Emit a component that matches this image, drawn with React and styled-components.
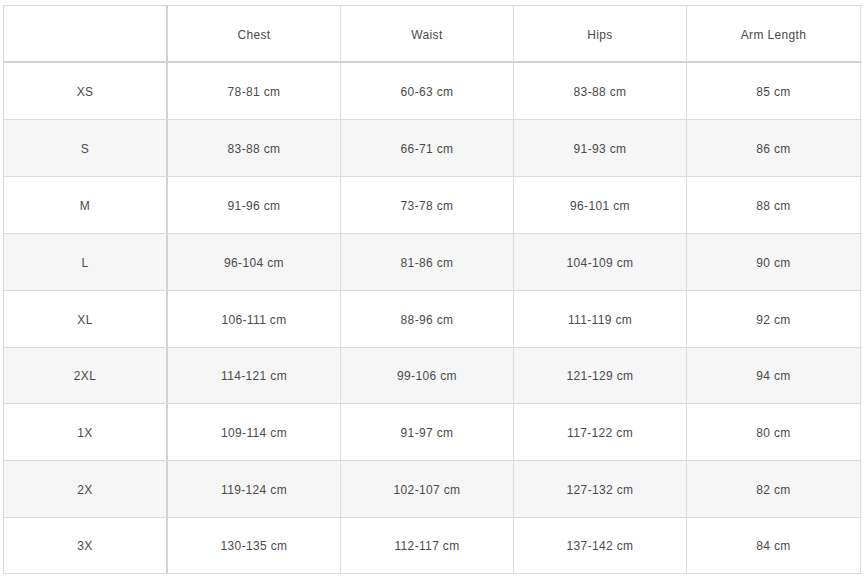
import React from "react";
import styled, { createGlobalStyle } from "styled-components";

const Global = createGlobalStyle`
  html, body { margin: 0; padding: 0; background: #ffffff; }
  body { font-family: "Liberation Sans", Arial, sans-serif; }
`;

const Page = styled.div`
  padding: 5px 0 0 3px;
`;

const Table = styled.div`
  display: flex;
  flex-direction: column;
  width: 858px;
  border-top: 1px solid #d8d8d8;
  border-left: 1px solid #d8d8d8;
  font-size: 12px;
  letter-spacing: 0.35px;
  color: #4a4a4a;
`;

const Row = styled.div`
  display: grid;
  grid-template-columns: 164px 173px 173px 173px 174px;
  height: ${(p) => p.$h}px;
  box-sizing: border-box;
  border-bottom: ${(p) => (p.$head ? "2px solid #d2d2d2" : "1px solid #dcdcdc")};
  background: ${(p) => (p.$shaded ? "#f6f6f6" : "#ffffff")};
`;

const Cell = styled.div`
  display: flex;
  align-items: center;
  justify-content: center;
  box-sizing: border-box;
  border-right: ${(p) => (p.$first ? "2px solid #d2d2d2" : "1px solid #dcdcdc")};
  padding-top: ${(p) => (p.$head ? 2 : 1)}px;
`;

const headers = ["Chest", "Waist", "Hips", "Arm Length"];
const rows = [
  ["XS", "78-81 cm", "60-63 cm", "83-88 cm", "85 cm"],
  ["S", "83-88 cm", "66-71 cm", "91-93 cm", "86 cm"],
  ["M", "91-96 cm", "73-78 cm", "96-101 cm", "88 cm"],
  ["L", "96-104 cm", "81-86 cm", "104-109 cm", "90 cm"],
  ["XL", "106-111 cm", "88-96 cm", "111-119 cm", "92 cm"],
  ["2XL", "114-121 cm", "99-106 cm", "121-129 cm", "94 cm"],
  ["1X", "109-114 cm", "91-97 cm", "117-122 cm", "80 cm"],
  ["2X", "119-124 cm", "102-107 cm", "127-132 cm", "82 cm"],
  ["3X", "130-135 cm", "112-117 cm", "137-142 cm", "84 cm"],
];
const heights = [57, 57, 57, 57, 57, 56, 57, 57, 56];

export default function App() {
  return (
    <>
      <Global />
      <Page>
        <Table>
          <Row $head $h={57}>
            <Cell $first $head />
            {headers.map((h) => (
              <Cell key={h} $head>
                {h}
              </Cell>
            ))}
          </Row>
          {rows.map((r, i) => (
            <Row key={r[0]} $h={heights[i]} $shaded={i % 2 === 1}>
              {r.map((c, j) => (
                <Cell key={j} $first={j === 0}>
                  {c}
                </Cell>
              ))}
            </Row>
          ))}
        </Table>
      </Page>
    </>
  );
}
